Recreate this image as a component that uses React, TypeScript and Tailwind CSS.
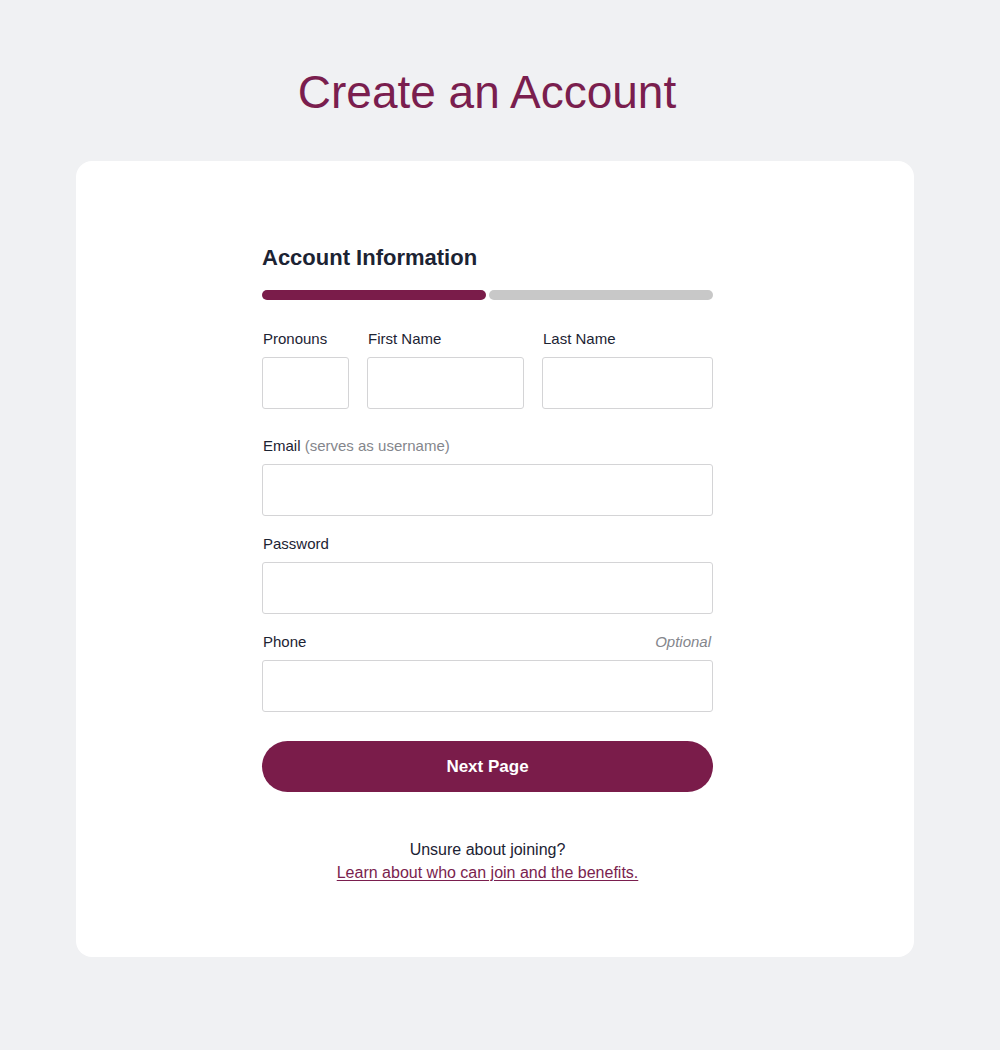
export default function App() {
  const font = { fontFamily: '"Liberation Sans", Arial, sans-serif' };

  return (
    <div className="min-h-[1050px] w-full bg-[#f0f1f3] pt-[62px] pb-[94px]" style={font}>
      <h1 className="pr-[26px] text-center text-[46px] leading-[60px] font-normal text-[#7a1e4e]">Create an Account</h1>

      <div className="ml-[76px] mt-[39px] w-[838px] rounded-[16px] bg-white pt-[83px] pb-[73px]">
        <div className="ml-[186px] w-[451px]">
          <h2 className="text-[22px] leading-[28px] font-bold text-[#1c2333]">Account Information</h2>

          <div className="mt-[18px] flex gap-[3px]">
            <div className="h-[10px] flex-1 rounded-full bg-[#7a1c4a]" />
            <div className="h-[10px] flex-1 rounded-full bg-[#c8c8c8]" />
          </div>

          <div className="mt-[29px] flex gap-[18px]">
            <Field label="Pronouns" className="w-[87px]" />
            <Field label="First Name" className="w-[157px]" />
            <Field label="Last Name" className="flex-1" />
          </div>

          <div className="mt-[27px] flex flex-col gap-[18px]">
            <Field
              label={
                <>
                  Email <span className="text-[#84868c]">(serves as username)</span>
                </>
              }
            />
            <Field label="Password" />
            <Field label="Phone" optional />
          </div>

          <button className="mt-[29px] h-[51px] w-full rounded-full bg-[#7a1c4a] text-[17px] font-bold text-white">
            Next Page
          </button>

          <div className="mt-[46px] text-center text-[16px] leading-[23px] text-[#1c2333]">
            <p>Unsure about joining?</p>
            <a href="#" className="text-[#7a1e4e] underline underline-offset-2">
              Learn about who can join and the benefits.
            </a>
          </div>
        </div>
      </div>
    </div>
  );
}

function Field({
  label,
  optional,
  className = '',
}: {
  label: React.ReactNode;
  optional?: boolean;
  className?: string;
}) {
  return (
    <div className={className}>
      <div className="flex h-[20px] items-baseline justify-between pl-[1px] pr-[2px] leading-[20px]">
        <label className="text-[15px] leading-[20px] text-[#1c2333]">{label}</label>
        {optional && <span className="text-[15px] leading-[20px] italic text-[#84868c]">Optional</span>}
      </div>
      <input className="mt-[8px] h-[52px] w-full rounded-[3px] border border-[#d4d4d6] bg-white" />
    </div>
  );
}
